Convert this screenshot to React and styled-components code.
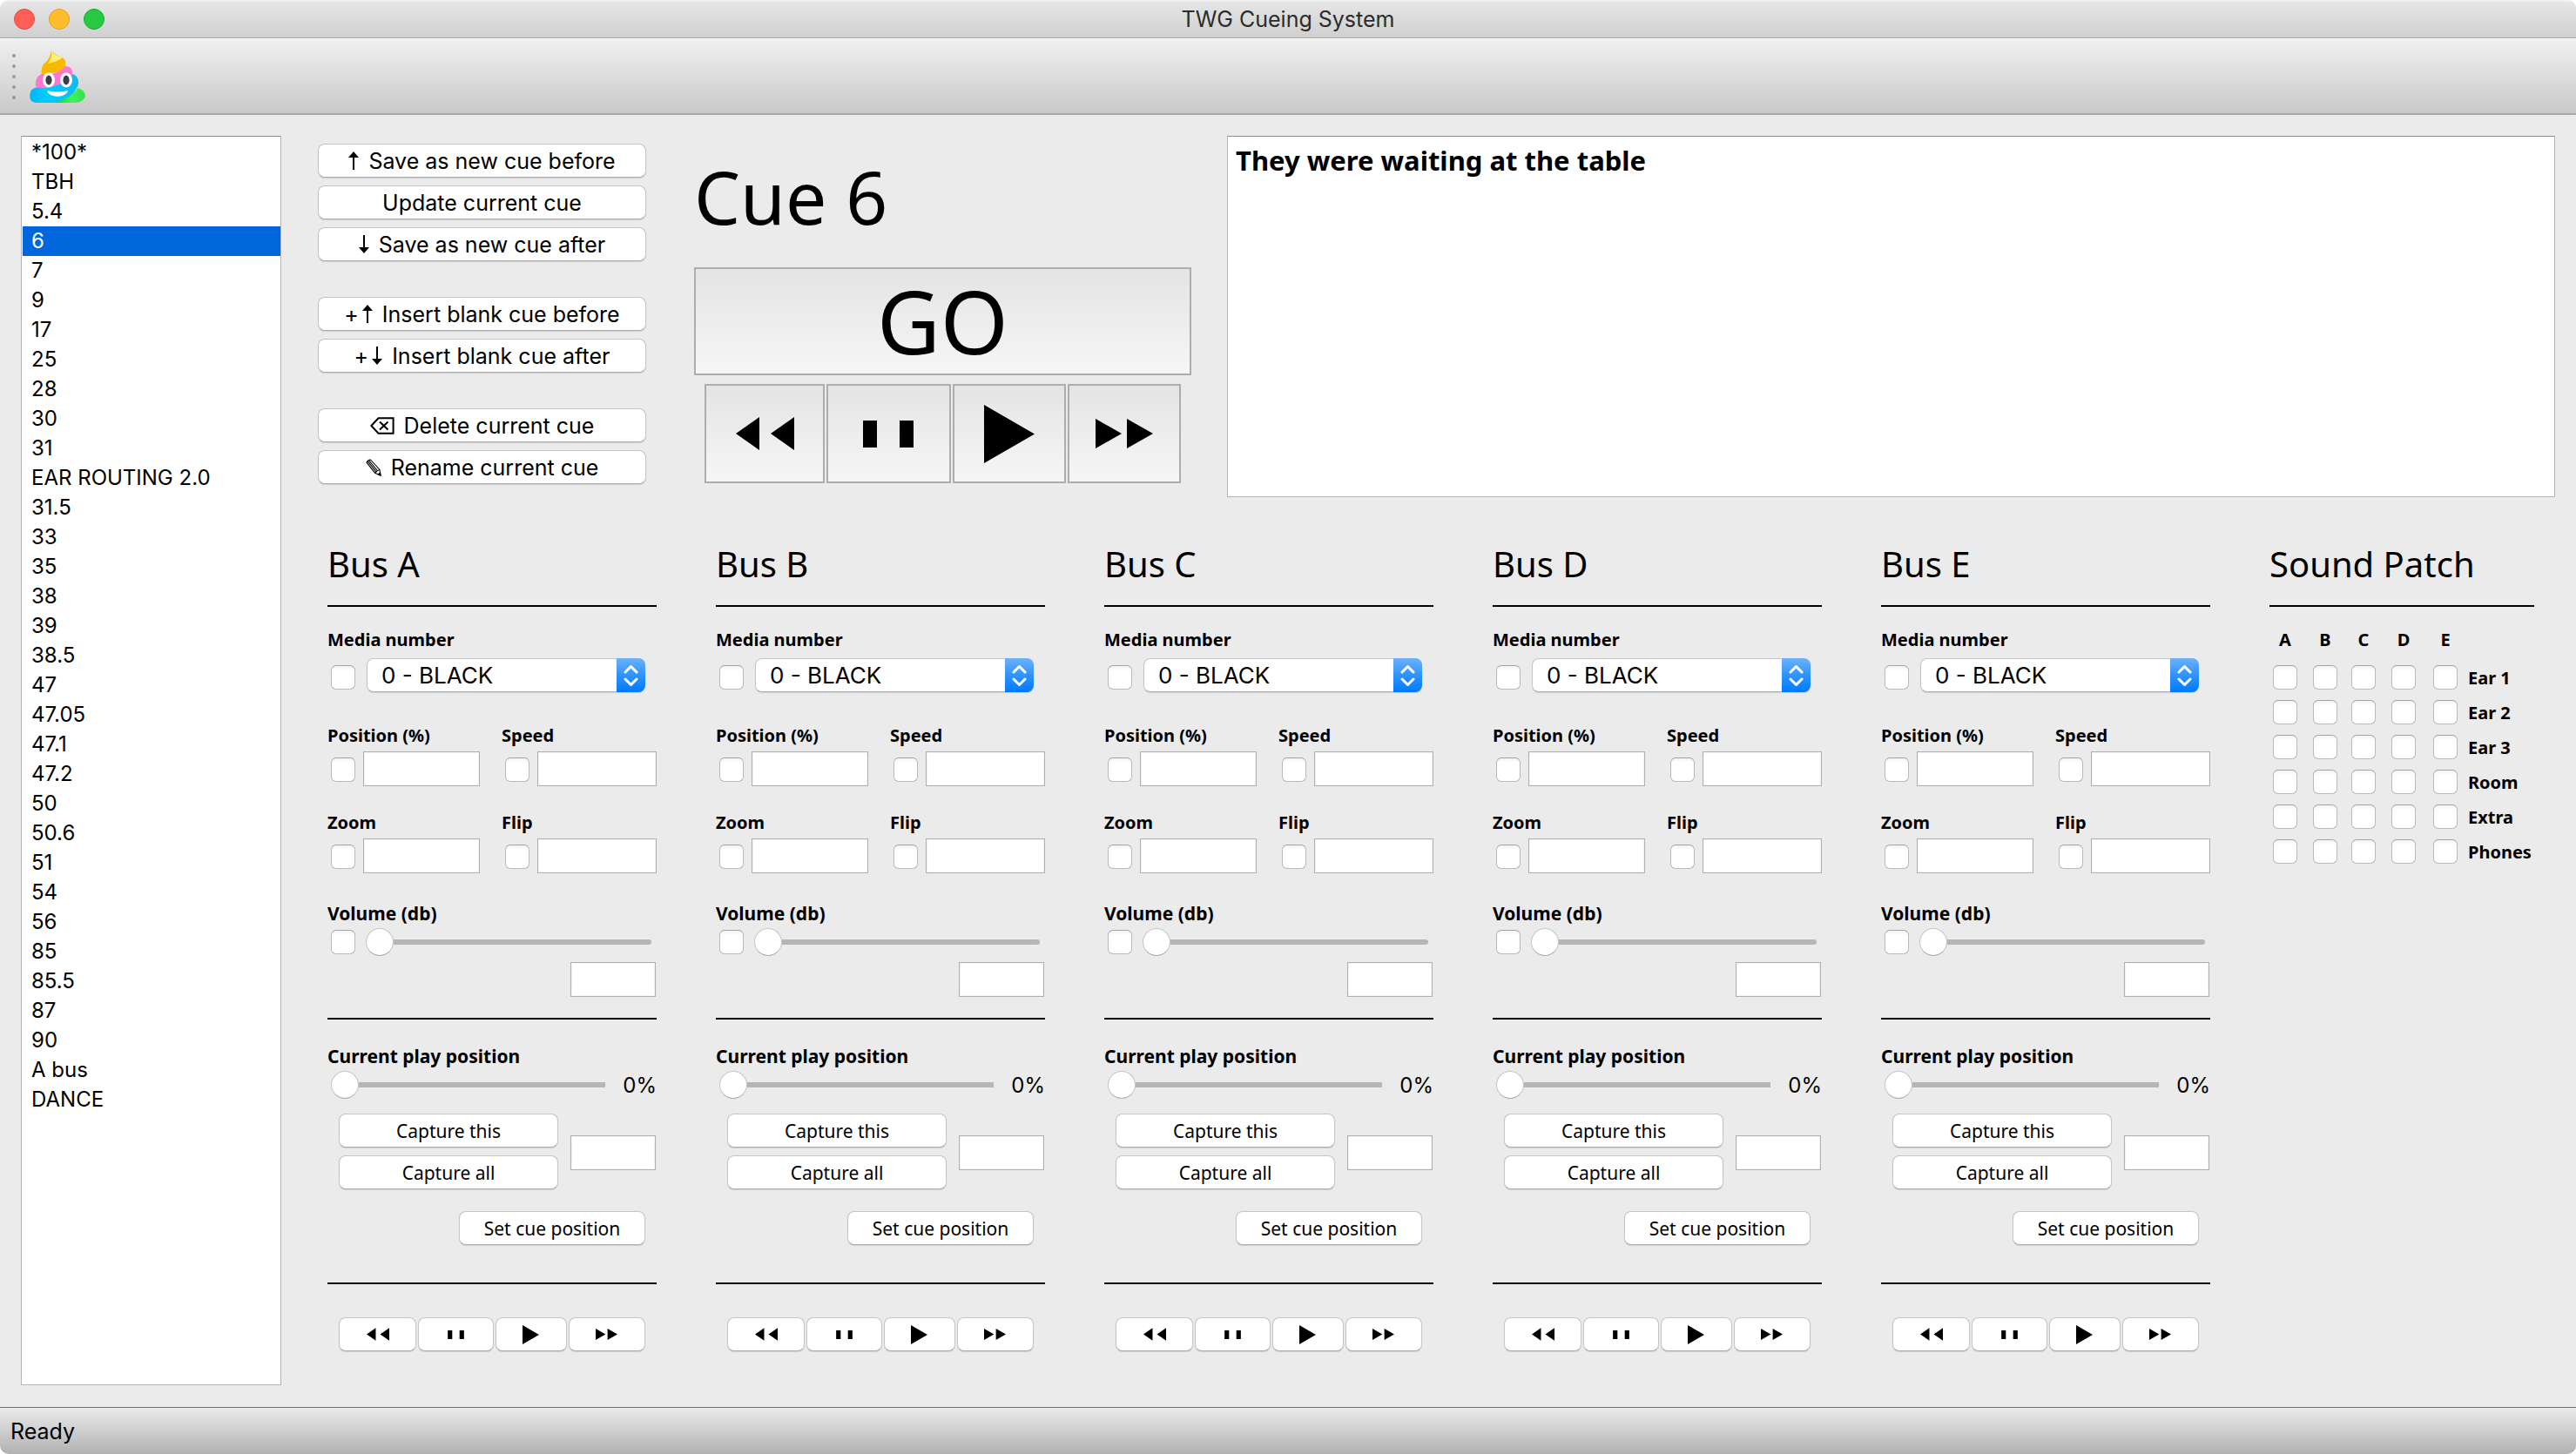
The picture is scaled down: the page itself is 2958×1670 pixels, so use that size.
import React, { useId, useState } from "react";
import styled, { createGlobalStyle, css } from "styled-components";

const ui = `Inter, "Liberation Sans", sans-serif`;
const lucid = `"Noto Sans", "Open Sans", sans-serif`;

const GlobalStyle = createGlobalStyle`
  *, *::before, *::after { box-sizing: border-box; }
  body { margin: 0; background: #fff; color: #000; font-family: ${ui}; }
  button, input, select, textarea { font: inherit; color: inherit; margin: 0; padding: 0; }
`;

const Window = styled.div`
  display: flex;
  flex-direction: column;
  min-height: 100vh;
  background: #ebebeb;
  border-radius: 10px;
  overflow: hidden;
`;

const TitleBar = styled.header`
  display: grid;
  grid-template-columns: 1fr auto 1fr;
  align-items: center;
  height: 44px;
  padding: 1px 16px 0;
  background: linear-gradient(#f4f4f4 0, #e5e5e5 3px, #d0d0d0 100%);
  border-bottom: 1px solid #a9a9a9;
`;

const Lights = styled.div`
  display: flex;
  gap: 16px;
`;

const Light = styled.button`
  width: 24px;
  height: 24px;
  border-radius: 50%;
  border: 1px solid ${(p) => p.$edge};
  background: ${(p) => p.$fill};
`;

const WindowTitle = styled.h1`
  margin: 0;
  font-size: 25px;
  font-weight: 400;
  line-height: 32px;
  color: #2c2c2c;
`;

const ToolBar = styled.div`
  display: flex;
  align-items: center;
  gap: 16px;
  height: 88px;
  padding: 0 14px;
  background: linear-gradient(#f0f0f0, #c9c9c9);
  border-top: 1px solid #fff;
  border-bottom: 2px solid #a9a9a9;
`;

const Grip = styled.div`
  display: grid;
  gap: 8px;
  i {
    width: 4px;
    height: 4px;
    border-radius: 50%;
    background: #989898;
  }
`;

const ToolButton = styled.button`
  display: flex;
  border: 0;
  background: none;
`;

const Main = styled.main`
  flex: 1;
  display: grid;
  grid-template-columns: 299px minmax(0, 1fr);
  gap: 42px;
  padding: 24px 24px 25px;
`;

const CueList = styled.ul`
  margin: 0;
  padding: 1px 0 1px 1px;
  list-style: none;
  background: #fff;
  border: 1px solid #b4b4b4;
  border-top-color: #8c8c8c;
  font-size: 24px;
`;

const CueItem = styled.button`
  display: block;
  width: 100%;
  height: 34px;
  padding: 0 10px;
  border: 0;
  text-align: left;
  line-height: 34px;
  background: ${(p) => (p.$on ? "#0066dc" : "#fff")};
  color: ${(p) => (p.$on ? "#fff" : "#000")};
`;

const Workspace = styled.div`
  display: flex;
  flex-direction: column;
  gap: 53px;
`;

const TopRow = styled.section`
  display: grid;
  grid-template-columns: 377px 585px minmax(0, 1fr);
  column-gap: 41px;
  height: 415px;
`;

const Actions = styled.div`
  display: flex;
  flex-direction: column;
  gap: 41px;
  padding-top: 9px;
`;

const ActionGroup = styled.div`
  display: grid;
  gap: 9px;
`;

const pushButton = css`
  display: flex;
  align-items: center;
  justify-content: center;
  height: 39px;
  border: 1px solid #c6c6c6;
  border-bottom-color: #acacac;
  border-radius: 8px;
  background: #fff;
  box-shadow: 0 1px 1px rgba(0, 0, 0, 0.12);
`;

const ActionButton = styled.button`
  ${pushButton}
  gap: 11px;
  font-size: 25px;
  line-height: 32px;
`;

const Glyph = styled.span`
  display: flex;
  align-items: center;
  gap: 4px;
`;

const CuePanel = styled.div`
  display: flex;
  flex-direction: column;
  padding: 20px 0 0 14px;
`;

const CueName = styled.h2`
  margin: 0 0 31px;
  font-family: ${lucid};
  font-size: 84px;
  font-weight: 400;
  line-height: 100px;
`;

const bevelButton = css`
  display: flex;
  align-items: center;
  justify-content: center;
  border: 2px solid #adadad;
  background: linear-gradient(#e4e4e4, #f6f6f6);
`;

const GoButton = styled.button`
  ${bevelButton}
  height: 124px;
  font-family: ${lucid};
  font-size: 100px;
  line-height: 120px;
  padding-bottom: 2px;
`;

const BigTransport = styled.div`
  display: grid;
  grid-template-columns: 138fr 142fr 130fr 130fr;
  gap: 2px;
  padding: 10px 12px 0;
`;

const BigButton = styled.button`
  ${bevelButton}
  height: 114px;
`;

const Notes = styled.textarea`
  display: block;
  width: 100%;
  height: 100%;
  padding: 9px;
  resize: none;
  outline: 0;
  border: 1px solid #b4b4b4;
  border-top-color: #8c8c8c;
  background: #fff;
  font-family: ${lucid};
  font-size: 31px;
  font-weight: 700;
  line-height: 36px;
`;

const Mixer = styled.section`
  display: grid;
  grid-template-columns: repeat(5, minmax(0, 1fr)) 304px;
  align-items: start;
  gap: 68px;
  padding: 0 24px 0 11px;
  font-family: ${lucid};
`;

const Strip = styled.section`
  display: flex;
  flex-direction: column;
`;

const StripTitle = styled.h3`
  margin: 0;
  padding-bottom: 23px;
  border-bottom: 2px solid #000;
  font-size: 40px;
  font-weight: 400;
  line-height: 48px;
  white-space: nowrap;
`;

const Section = styled.div`
  display: flex;
  flex-direction: column;
  padding: ${(p) => p.$pad};
  ${(p) => p.$rule && "border-bottom: 2px solid #000;"}
`;

const Label = styled.label`
  font-size: ${(p) => (p.$large ? 21 : 20)}px;
  font-weight: 700;
  line-height: 28px;
  margin-bottom: ${(p) => p.$gap || 4}px;
`;

const Field = styled.div`
  display: flex;
  flex-direction: column;
`;

const FieldRow = styled.div`
  display: flex;
  align-items: center;
  gap: ${(p) => p.$gap || 9}px;
  padding: 0 ${(p) => p.$right || 0}px 0 4px;
`;

const FieldGrid = styled.div`
  display: grid;
  grid-template-columns: 175fr 178fr;
  gap: 28px 25px;
  padding: 36px 0 32px;
`;

const Check = styled.input.attrs({ type: "checkbox" })`
  appearance: none;
  flex: none;
  display: block;
  width: 28px;
  height: 28px;
  margin-top: ${(p) => p.$drop || 0}px;
  border: 1px solid #b9b9b9;
  border-top-color: #a3a3a3;
  border-radius: 6px;
  background: linear-gradient(#f2f2f2, #fff 5px);
  &:checked {
    background: #1a82ff;
  }
`;

const TextBox = styled.input.attrs({ type: "text" })`
  flex: ${(p) => (p.$small ? "none" : "1")};
  width: ${(p) => (p.$small ? "98px" : "0")};
  min-width: 0;
  height: 40px;
  padding: 0 6px;
  border: 1px solid #b0b0b0;
  border-radius: 0;
  outline: 0;
  background: #fff;
  box-shadow: inset 0 0 0 1px #f4f4f4;
  align-self: ${(p) => (p.$end ? "flex-end" : "auto")};
  font-size: 20px;
`;

const SelectBox = styled.div`
  position: relative;
  flex: 1;
  height: 39px;
  border-radius: 8px;
  box-shadow: 0 1px 1px rgba(0, 0, 0, 0.12);
  select {
    appearance: none;
    display: block;
    width: 100%;
    height: 39px;
    padding: 0 40px 0 16px;
    border: 1px solid #c6c6c6;
    border-bottom-color: #acacac;
    border-radius: 8px;
    outline: 0;
    background: #fff;
    font-family: ${ui};
    font-size: 26px;
    line-height: 36px;
  }
`;

const SelectArrow = styled.span`
  position: absolute;
  top: 0;
  right: 0;
  display: flex;
  align-items: center;
  justify-content: center;
  width: 33px;
  height: 39px;
  border-radius: 0 8px 8px 0;
  background: linear-gradient(#6bb3fa, #2f93fb 50%, #007aff);
  pointer-events: none;
`;

const Slider = styled.input.attrs({ type: "range" })`
  appearance: none;
  flex: 1;
  min-width: 0;
  height: 32px;
  background: none;
  outline: 0;
  &::-webkit-slider-runnable-track {
    height: 6px;
    border-radius: ${(p) => (p.$square ? 0 : "0 3px 3px 0")};
    background: linear-gradient(90deg, transparent 5%, #b6b6b6 5%);
  }
  &::-webkit-slider-thumb {
    appearance: none;
    width: 32px;
    height: 32px;
    margin-top: -13px;
    border: 1px solid #c4c4c4;
    border-bottom-color: #ababab;
    border-radius: 50%;
    background: #fff;
  }
`;

const Percent = styled.output`
  padding-top: 2px;
  font-family: ${ui};
  font-size: 24px;
  line-height: 30px;
`;

const SmallButton = styled.button`
  ${pushButton}
  font-size: 21px;
  line-height: 28px;
  padding: 0 20px;
  align-self: ${(p) => (p.$end ? "flex-end" : "auto")};
  width: ${(p) => (p.$end ? "214px" : "auto")};
`;

const CaptureRow = styled.div`
  display: grid;
  grid-template-columns: minmax(0, 1fr) 98px;
  align-items: center;
  gap: 14px;
  padding: 17px 1px 25px 13px;
  > input {
    margin-top: 3px;
  }
`;

const SmallTransport = styled.div`
  display: grid;
  grid-template-columns: 89fr 86fr 82fr 88fr;
  gap: 2px;
  padding: 38px 13px 0;
  button {
    padding: 0;
  }
`;

const PatchTable = styled.table`
  margin-top: 24px;
  border-collapse: collapse;
  table-layout: fixed;
  width: 100%;
  font-size: 20px;
  line-height: 28px;
  th, td {
    padding: 0 0 0 4px;
    font-weight: 700;
    text-align: left;
    white-space: nowrap;
  }
  thead th {
    height: 37px;
    vertical-align: top;
  }
  thead span {
    display: block;
    width: 28px;
    text-align: center;
  }
  tbody tr {
    height: 40px;
  }
  tbody th {
    padding: 2px 0 0 0;
  }
`;

const StatusBar = styled.footer`
  display: flex;
  align-items: center;
  height: 54px;
  padding: 0 12px;
  border-top: 1px solid #6f716f;
  background: linear-gradient(#ebebeb, #b1b1b1);
  font-size: 25px;
  line-height: 32px;
`;

const shapes = {
  back: { box: [67, 38], d: "M27 0V38L0 19ZM67 0V38L40 19Z" },
  pause: { box: [58, 31], d: "M0 0H16V31H0ZM42 0H58V31H42Z" },
  play: { box: [58, 67], d: "M0 0L58 33.5L0 67Z" },
  forward: { box: [66, 34], d: "M0 0L30 17L0 34ZM36 0L66 17L36 34Z" },
};

const transport = [
  { id: "back", label: "Rewind", small: 15 },
  { id: "pause", label: "Pause", small: 10 },
  { id: "play", label: "Play", small: 22 },
  { id: "forward", label: "Fast forward", small: 13 },
];

function TransportIcon({ id, height }) {
  const { box, d } = shapes[id];
  const h = height || box[1];
  return (
    <svg width={Math.round((box[0] * h) / box[1])} height={h} viewBox={`0 0 ${box[0]} ${box[1]}`} aria-hidden="true">
      <path d={d} />
    </svg>
  );
}

function Arrow({ down }) {
  return (
    <svg width="12" height="21" viewBox="0 0 12 21" aria-hidden="true">
      <path d={down ? "M5 0H7V14L12 14L6 21L0 14L5 14Z" : "M5 21H7V7L12 7L6 0L0 7L5 7Z"} />
    </svg>
  );
}

function EraseIcon() {
  return (
    <svg width="28" height="20" viewBox="0 0 28 20" fill="none" stroke="#000" strokeWidth="2" aria-hidden="true">
      <path d="M1.4 10L9.5 1.2H26.6V18.8H9.5Z" />
      <path d="M11 5.5L20.5 14.5M20.5 5.5L11 14.5" />
    </svg>
  );
}

function PencilIcon() {
  return (
    <svg width="18" height="20" viewBox="0 0 18 20" fill="none" stroke="#000" strokeWidth="1.1" aria-hidden="true">
      <path d="M1 4.2Q2.4 1.2 5.4 1L16 12.4L17 19L10.6 16.2Z" />
      <path d="M2.2 2.8L12 14.8M3.6 1.8L13.4 13.6M10.6 16.2L12 14.8L13.4 13.6L16 12.4" />
      <path d="M14.4 17.8L16.5 15.6L17 19Z" fill="#000" />
    </svg>
  );
}

function RainbowPile() {
  return (
    <svg width="64" height="60" viewBox="0 0 64 60" aria-hidden="true">
      <defs>
        <linearGradient id="pile-green" x1="0" x2="1">
          <stop offset="0" stopColor="#00d836" />
          <stop offset="0.6" stopColor="#3ff25a" />
          <stop offset="1" stopColor="#35e04a" />
        </linearGradient>
        <linearGradient id="pile-blue" x1="0" y1="0" x2="1" y2="0">
          <stop offset="0" stopColor="#00b4f5" />
          <stop offset="0.3" stopColor="#00ccff" />
          <stop offset="1" stopColor="#12b9f2" />
        </linearGradient>
      </defs>
      <path d="M25 0C24 6 22 10 18 14C14 17 13 22 14 28L36 24C42 20 43 13 39 9C35 7 29 5 25 0Z" fill="#fbb800" />
      <path d="M25 0C26 5 25 10 21 15C26 14 33 12 38 8C33 7 28 5 25 0Z" fill="#fff07a" />
      <path d="M14 27C22 29 35 26 41 18C47 18 50 22 49 28C46 38 22 44 8 43C5 37 8 29 14 27Z" fill="#fb78d2" />
      <path d="M50 27C56 30 58 37 54 43L50 50C44 56 36 60 28 60H8C1 60 -1 54 1 48C2 44 6 42 12 43C26 43 42 38 50 27Z" fill="url(#pile-blue)" />
      <path d="M27 60C40 57 50 52 55 43C63 45 66 52 62 56C59 59 56 60 50 60Z" fill="url(#pile-green)" />
      <g fill="#fff">
        <ellipse cx="22" cy="34" rx="7" ry="8.5" />
        <ellipse cx="42" cy="34" rx="7" ry="8.5" />
        <path d="M20 46C28 48 36 48 44 46C42 55 22 55 20 46Z" />
      </g>
      <g fill="#3a3c46">
        <ellipse cx="22" cy="34" rx="3.6" ry="5.4" />
        <ellipse cx="42" cy="34" rx="3.6" ry="5.4" />
      </g>
    </svg>
  );
}

function CheckedInput({ label }) {
  const id = useId();
  return (
    <Field>
      <Label htmlFor={id}>{label}</Label>
      <FieldRow>
        <Check $drop={2} aria-label={`Set ${label}`} />
        <TextBox id={id} />
      </FieldRow>
    </Field>
  );
}

function Bus({ name }) {
  const id = useId();
  return (
    <Strip>
      <StripTitle>Bus {name}</StripTitle>
      <Section $pad="24px 0 24px" $rule>
        <Label htmlFor={`${id}media`} $gap={7}>Media number</Label>
        <FieldRow $gap={13} $right={13}>
          <Check $drop={4} aria-label="Set media number" />
          <SelectBox>
            <select id={`${id}media`} defaultValue="0">
              <option value="0">0 - BLACK</option>
            </select>
            <SelectArrow>
              <svg width="17" height="26" viewBox="0 0 17 26" fill="none" stroke="#fff" strokeWidth="3" strokeLinecap="round" strokeLinejoin="round" aria-hidden="true">
                <path d="M2 9L8.5 2.5L15 9M2 17L8.5 23.5L15 17" />
              </svg>
            </SelectArrow>
          </SelectBox>
        </FieldRow>
        <FieldGrid>
          <CheckedInput label="Position (%)" />
          <CheckedInput label="Speed" />
          <CheckedInput label="Zoom" />
          <CheckedInput label="Flip" />
        </FieldGrid>
        <Label htmlFor={`${id}volume`} $large $gap={3}>Volume (db)</Label>
        <FieldRow $gap={12} $right={6}>
          <Check aria-label="Set volume" />
          <Slider id={`${id}volume`} defaultValue={0} />
        </FieldRow>
        <Section $pad="7px 1px 0 0">
          <TextBox $small $end aria-label="Volume in db" />
        </Section>
      </Section>
      <Section $pad="28px 0 43px" $rule>
        <Label htmlFor={`${id}play`} $large $gap={3}>Current play position</Label>
        <FieldRow $gap={20}>
          <Slider id={`${id}play`} $square defaultValue={0} />
          <Percent htmlFor={`${id}play`}>0%</Percent>
        </FieldRow>
        <CaptureRow>
          <ActionGroup>
            <SmallButton>Capture this</SmallButton>
            <SmallButton>Capture all</SmallButton>
          </ActionGroup>
          <TextBox $small aria-label="Captured position" />
        </CaptureRow>
        <Section $pad="0 13px 0 0">
          <SmallButton $end>Set cue position</SmallButton>
        </Section>
      </Section>
      <SmallTransport>
        {transport.map((t) => (
          <SmallButton key={t.id} aria-label={t.label}>
            <TransportIcon id={t.id} height={t.small} />
          </SmallButton>
        ))}
      </SmallTransport>
    </Strip>
  );
}

const buses = ["A", "B", "C", "D", "E"];
const outputs = ["Ear 1", "Ear 2", "Ear 3", "Room", "Extra", "Phones"];
const cues = [
  "*100*", "TBH", "5.4", "6", "7", "9", "17", "25", "28", "30", "31",
  "EAR ROUTING 2.0", "31.5", "33", "35", "38", "39", "38.5", "47", "47.05",
  "47.1", "47.2", "50", "50.6", "51", "54", "56", "85", "85.5", "87", "90",
  "A bus", "DANCE",
];

function SoundPatch() {
  return (
    <Strip>
      <StripTitle>Sound Patch</StripTitle>
      <PatchTable>
        <colgroup>
          <col width="46" />
          <col width="44" />
          <col width="46" />
          <col width="48" />
          <col width="44" />
          <col />
        </colgroup>
        <thead>
          <tr>
            {buses.map((b) => (
              <th key={b} scope="col"><span>{b}</span></th>
            ))}
            <td />
          </tr>
        </thead>
        <tbody>
          {outputs.map((o) => (
            <tr key={o}>
              {buses.map((b) => (
                <td key={b}><Check aria-label={`Bus ${b} to ${o}`} /></td>
              ))}
              <th scope="row">{o}</th>
            </tr>
          ))}
        </tbody>
      </PatchTable>
    </Strip>
  );
}

export default function App() {
  const [cue, setCue] = useState("6");
  return (
    <>
      <GlobalStyle />
      <Window>
        <TitleBar>
          <Lights>
            <Light aria-label="Close" $fill="#ff5f57" $edge="#e2463f" />
            <Light aria-label="Minimize" $fill="#ffbd2e" $edge="#e1a116" />
            <Light aria-label="Zoom" $fill="#28c940" $edge="#12ac28" />
          </Lights>
          <WindowTitle>TWG Cueing System</WindowTitle>
        </TitleBar>
        <ToolBar>
          <Grip><i /><i /><i /><i /><i /></Grip>
          <ToolButton aria-label="Rainbow"><RainbowPile /></ToolButton>
        </ToolBar>
        <Main>
          <CueList>
            {cues.map((c) => (
              <li key={c}>
                <CueItem $on={c === cue} aria-pressed={c === cue} onClick={() => setCue(c)}>{c}</CueItem>
              </li>
            ))}
          </CueList>
          <Workspace>
            <TopRow>
              <Actions>
                <ActionGroup>
                  <ActionButton><Arrow />Save as new cue before</ActionButton>
                  <ActionButton>Update current cue</ActionButton>
                  <ActionButton><Arrow down />Save as new cue after</ActionButton>
                </ActionGroup>
                <ActionGroup>
                  <ActionButton><Glyph>+<Arrow /></Glyph>Insert blank cue before</ActionButton>
                  <ActionButton><Glyph>+<Arrow down /></Glyph>Insert blank cue after</ActionButton>
                </ActionGroup>
                <ActionGroup>
                  <ActionButton><EraseIcon />Delete current cue</ActionButton>
                  <ActionButton><PencilIcon />Rename current cue</ActionButton>
                </ActionGroup>
              </Actions>
              <CuePanel>
                <CueName>Cue {cue}</CueName>
                <GoButton>GO</GoButton>
                <BigTransport>
                  {transport.map((t) => (
                    <BigButton key={t.id} aria-label={t.label}>
                      <TransportIcon id={t.id} />
                    </BigButton>
                  ))}
                </BigTransport>
              </CuePanel>
              <Notes aria-label="Cue notes" defaultValue="They were waiting at the table" spellCheck={false} />
            </TopRow>
            <Mixer>
              {buses.map((b) => (
                <Bus key={b} name={b} />
              ))}
              <SoundPatch />
            </Mixer>
          </Workspace>
        </Main>
        <StatusBar>Ready</StatusBar>
      </Window>
    </>
  );
}
